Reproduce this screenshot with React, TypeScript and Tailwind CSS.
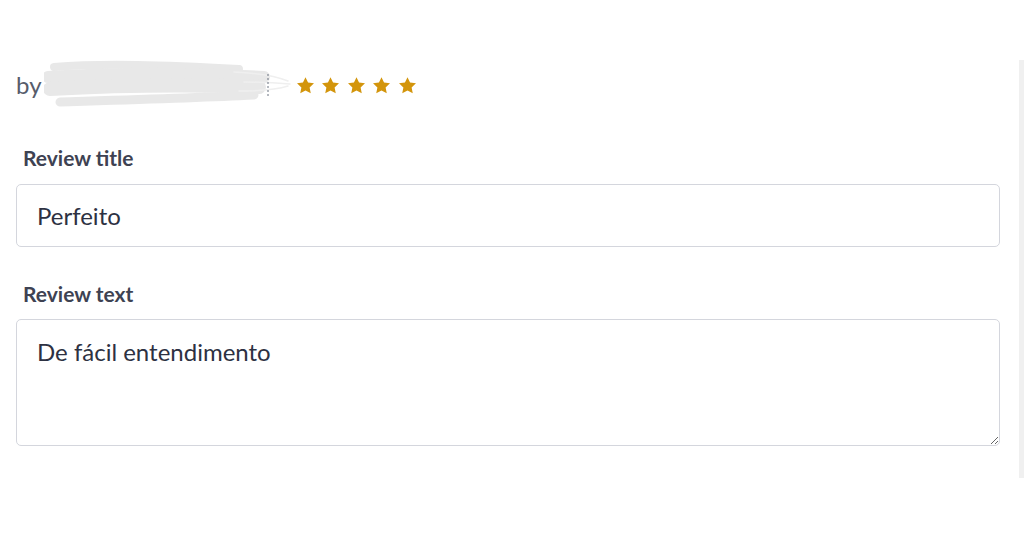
import React from 'react';

function Star() {
  return (
    <svg viewBox="0 0 24 24" className="w-[21px] h-[21px]" fill="#d3950c">
      <path d="M12 2.5l2.9 6.2 6.8.8-5 4.7 1.3 6.7L12 17.6l-6 3.3 1.3-6.7-5-4.7 6.8-.8z" />
    </svg>
  );
}

function Scribble() {
  return (
    <svg width="248" height="50" viewBox="0 0 248 50" className="block">
      <g stroke="#e8e8e8" strokeLinecap="round" fill="none">
        <path d="M10 7 C60 3 120 5 195 9" strokeWidth="8" />
        <path d="M4 17 C70 13 150 13 220 17" strokeWidth="12" />
        <path d="M6 29 C80 25 160 25 215 27" strokeWidth="14" />
        <path d="M16 42 C80 40 150 38 210 35" strokeWidth="9" />
      </g>
      <g stroke="#efefef" strokeLinecap="round" fill="none" strokeWidth="1.5">
        <path d="M190 12 C215 13 232 16 244 21" />
        <path d="M200 22 C220 22 235 23 246 24" />
        <path d="M195 31 C220 31 235 29 244 26" />
      </g>
      <line x1="224" y1="14" x2="224" y2="38" stroke="#6b7280" strokeWidth="1" strokeDasharray="2 2" />
    </svg>
  );
}

export default function App() {
  return (
    <div className="relative w-[1024px] h-[538px] bg-white font-['Lato',sans-serif] text-[#2d3142]">
      {/* scrollbar track */}
      <div className="absolute right-0 top-[60px] w-[5px] h-[418px] bg-[#f0f0f0]" />

      <div className="pt-[61px] pl-[16px] pr-[24px]">
        <div className="flex items-center h-[48px]">
          <span className="text-[24px] text-[#575c6b] leading-none">by</span>
          <div className="ml-[2px]">
            <Scribble />
          </div>
          <div className="flex gap-[4.5px] ml-[3px]">
            <Star />
            <Star />
            <Star />
            <Star />
            <Star />
          </div>
        </div>

        <label className="block mt-[38px] ml-[7px] text-[21px] font-bold text-[#3e4252] leading-[22px]">
          Review title
        </label>
        <div className="mt-[15px] h-[63px] border border-[#d4d6dd] rounded-[5px] flex items-center px-[20px] text-[24px]">
          Perfeito
        </div>

        <label className="block mt-[36px] ml-[7px] text-[21px] font-bold text-[#3e4252] leading-[22px]">
          Review text
        </label>
        <textarea
          className="block mt-[14px] w-full h-[127px] border border-[#d4d6dd] rounded-[5px] px-[20px] pt-[18px] text-[24px] leading-[28px] outline-none resize-y"
          defaultValue="De fácil entendimento"
        />
      </div>
    </div>
  );
}
